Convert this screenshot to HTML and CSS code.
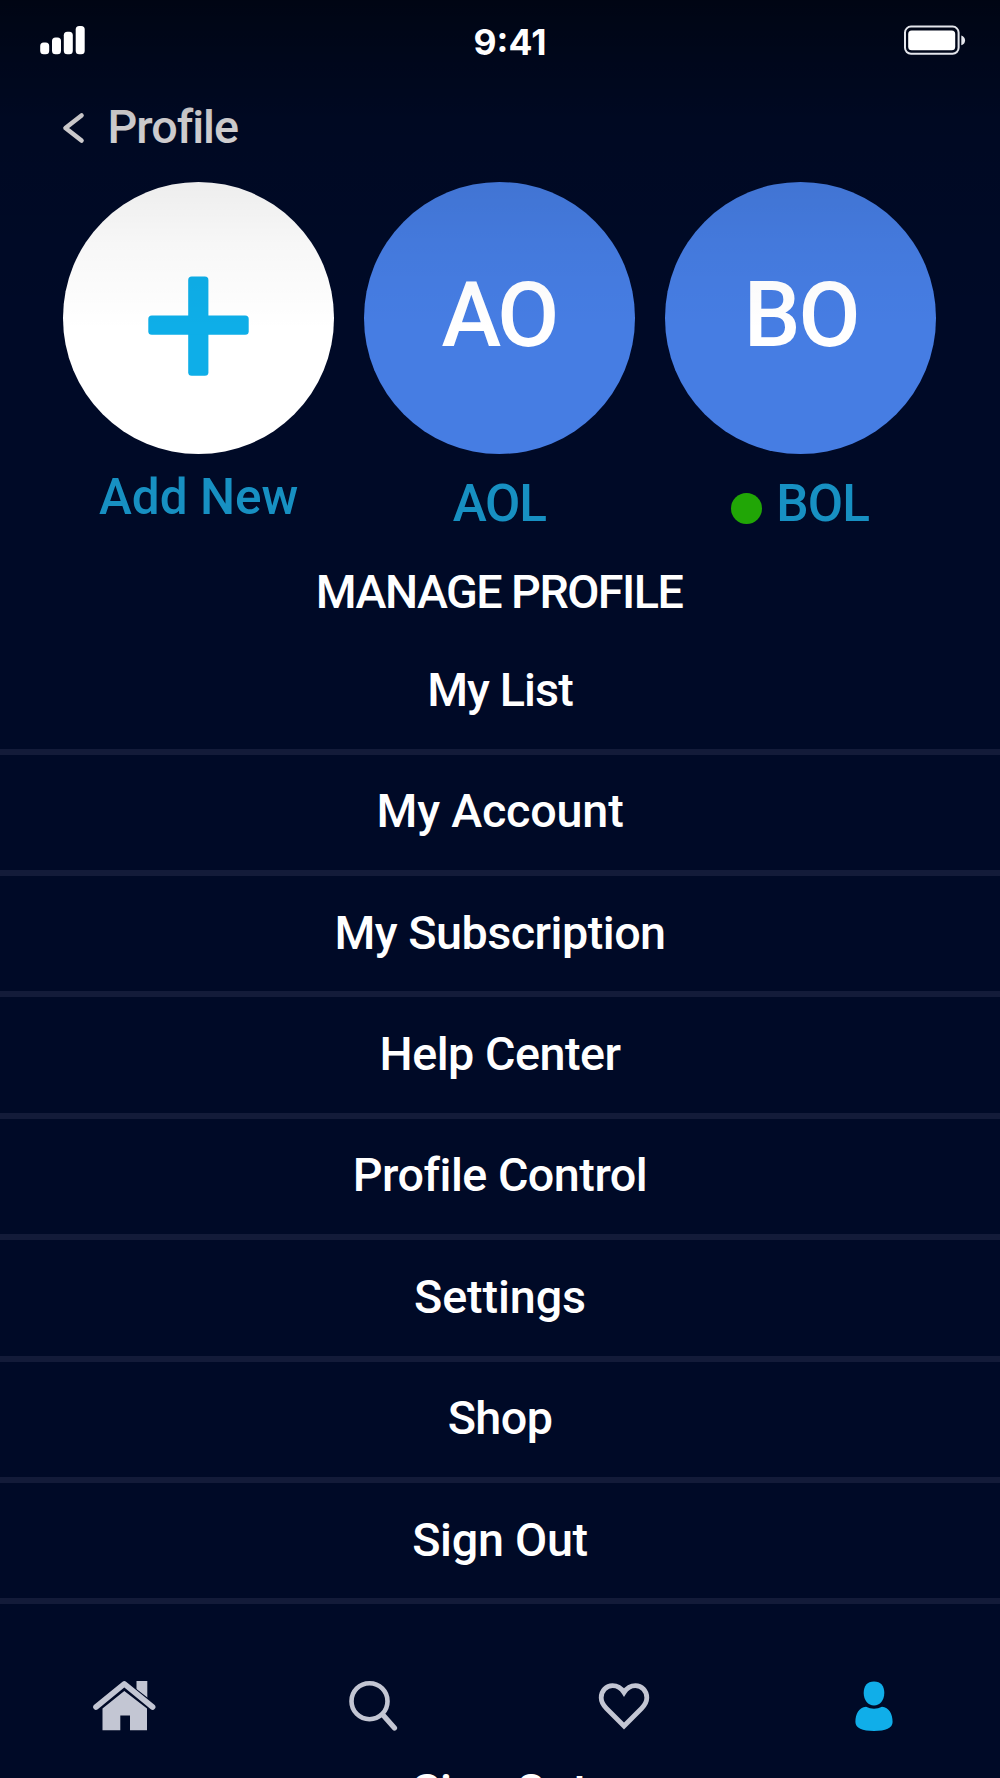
FILE: index.html
```
<!DOCTYPE html>
<html lang="en">
<head>
<meta charset="utf-8">
<title>Profile</title>
<link rel="stylesheet" href="styles.css">
</head>
<body>
<div class="screen">
  <div class="status">
    <svg class="signal" width="46" height="30" viewBox="0 0 46 30" fill="#fff">
      <rect x="0.2" y="17.5" width="9" height="11.8" rx="3.5"/>
      <rect x="12" y="12.6" width="9" height="16.7" rx="3.5"/>
      <rect x="23.8" y="6.8" width="9" height="22.5" rx="3.5"/>
      <rect x="35.7" y="1" width="9" height="28.3" rx="3.5"/>
    </svg>
    <div class="time">9:41</div>
    <svg class="battery" width="62" height="30" viewBox="0 0 62 30">
      <rect x="1" y="1.6" width="53.6" height="27.2" rx="6" fill="none" stroke="#e4e6ec" stroke-width="2"/>
      <rect x="4.2" y="5.6" width="47" height="19.6" rx="3.5" fill="#fff"/>
      <path d="M57.3 10.6c5 1.4 5 8.2 0 9.6z" fill="#e4e6ec"/>
    </svg>
  </div>

  <header class="header">
    <svg class="back" width="24" height="34" viewBox="0 0 24 34" fill="none" stroke="#e6e4e6" stroke-width="4.6" stroke-linecap="round" stroke-linejoin="round"><path d="M19.500 4.500 3.500 17 19.500 29.500"/></svg>
    <h1 class="title">Profile</h1>
  </header>

  <section class="profiles">
    <div class="profile">
      <div class="avatar avatar-add">
        <svg width="102" height="101" viewBox="0 0 102 101" fill="#0eaee8"><rect x="40.2" y="0.5" width="20.2" height="99.2" rx="3.5"/><rect x="0.3" y="39.6" width="100.4" height="19.2" rx="3.5"/></svg>
      </div>
      <div class="label label-add">Add New</div>
    </div>
    <div class="profile">
      <div class="avatar ao">AO</div>
      <div class="label aol">AOL</div>
    </div>
    <div class="profile">
      <div class="avatar bo">BO</div>
      <div class="label bol"><span class="dot"></span>BOL</div>
    </div>
  </section>

  <h2 class="heading">MANAGE PROFILE</h2>

  <ul class="menu">
    <li class="item list">My List</li>
    <li class="item account">My Account</li>
    <li class="item subscription">My Subscription</li>
    <li class="item help">Help Center</li>
    <li class="item control">Profile Control</li>
    <li class="item settings">Settings</li>
    <li class="item shop">Shop</li>
    <li class="item signout">Sign Out</li>
  </ul>

  <nav class="tabs">
    <svg width="64" height="52" viewBox="0 0 64 52" fill="#c3c6d3">
      <path d="M44.500 1h10.800v21.500L44.500 14z"/>
      <path d="M4 27.300 32.300 5.200 60.600 27.300" fill="none" stroke="#000a27" stroke-width="9"/>
      <path d="M10.500 28.500 32.300 11 55 28.500V50.300H38V35.500H28.300V50.300H10.500z"/>
      <path d="M4 27 32.300 3.800 60.600 27" fill="none" stroke="#c3c6d3" stroke-width="5.600" stroke-linecap="round" stroke-linejoin="round"/>
    </svg>
    <svg width="52" height="52" viewBox="0 0 52 52" fill="none" stroke="#c3c6d3" stroke-width="4.600" stroke-linecap="round"><circle cx="21.500" cy="21.200" r="18"/><path d="M35 35 46.500 48" stroke-width="5.200"/></svg>
    <svg width="54" height="52" viewBox="0 0 54 52" fill="none" stroke="#c3c6d3" stroke-width="4.800" stroke-linejoin="miter"><path d="M27 46 9.500 28.500C5.500 24.500 4.200 21.500 4.200 17.800 4.200 10.500 9.500 5.700 15.500 5.700 20.500 5.700 24.500 8.500 27 12.500 29.500 8.500 33.500 5.700 38.500 5.700 44.500 5.700 49.800 10.500 49.800 17.800 49.800 21.500 48.500 24.500 44.500 28.500z"/></svg>
    <svg width="40" height="52" viewBox="0 0 40 52" fill="#10aee9"><path d="M20 1.500c6.800 0 10.300 4.300 10.300 11.500S26 25.500 20 25.500 9.700 20.200 9.700 13 13.200 1.500 20 1.500z"/><path d="M12 26.800Q20 30.500 28 26.800C35 27.500 38.600 34 38.600 42c0 6-7 9-18.600 9S1.400 48 1.400 42C1.400 34 5 27.500 12 26.800z"/></svg>
  </nav>
  <div class="item signout">Sign Out</div>
</div>
</body>
</html>
```
FILE: styles.css
```
* { box-sizing: border-box; }

body {
  margin: 0;
  background: #000a27;
  color: #fff;
  font-family: Roboto, sans-serif;
  font-weight: 500;
}

.screen {
  position: relative;
  width: 1000px;
  height: 1778px;
  overflow: hidden;
}

/* dark fade over the top of the screen */
.screen::after {
  content: "";
  position: absolute;
  inset: 0 0 auto;
  height: 330px;
  pointer-events: none;
  background: linear-gradient(rgba(0,0,0,.5), rgba(0,0,0,.3) 60px, rgba(0,0,0,.13) 120px, rgba(0,0,0,.07) 182px, rgba(0,0,0,.03) 245px, rgba(0,0,0,0));
}

.status {
  position: relative;
  z-index: 1;
  display: grid;
  grid-template-columns: 1fr auto 1fr;
  align-items: center;
  height: 80px;
  padding: 0 34px 0 40px;
}
.battery { justify-self: end; }
.time {
  margin: 6px 0 0 14px;
  font: 700 35.5px/44px Inter, sans-serif;
}

.header {
  display: flex;
  align-items: center;
  height: 92px;
  padding-left: 62px;
}
.back { margin-top: 3px; }
.title {
  margin: 2px 0 0 21.5px;
  color: #e8e6e8;
  font-size: 46.7px;
  font-weight: 500;
  letter-spacing: -1px;
}

.profiles {
  display: flex;
  gap: 29.7px;
  height: 391.7px;
  padding: 10px 0 0 63px;
}
.profile {
  display: flex;
  flex-direction: column;
  align-items: center;
  width: 271.3px;
}
.avatar {
  display: flex;
  flex: none;
  align-items: center;
  justify-content: center;
  width: 271.3px;
  height: 271.7px;
  padding-bottom: 4px;
  border-radius: 50%;
  background: #467de3;
  font-size: 90px;
}
.avatar-add {
  padding: 17px 0 0;
  background: #fff;
}
.ao { padding-right: 2px; letter-spacing: -3.4px; }
.bo { padding-left: 1px; letter-spacing: -2px; }

.label {
  display: flex;
  align-items: center;
  margin-top: 20.8px;
  color: #1790c2;
  font-size: 51.3px;
  font-weight: 500;
  line-height: 60px;
}
.label-add { margin-top: 13px; font-size: 49.5px; }
.aol { padding-right: 1px; letter-spacing: -1.27px; }
.bol { letter-spacing: -.88px; }
.dot {
  width: 31px;
  height: 31px;
  margin: 8px 14px 0 -1px;
  border-radius: 50%;
  background: #21a606;
}

.heading {
  height: 69.5px;
  margin: 0;
  padding-right: 2px;
  font-size: 46.7px;
  font-weight: 500;
  line-height: 56px;
  letter-spacing: -1.54px;
  text-align: center;
}

.menu { margin: 0; padding: 0; list-style: none; }
.item {
  display: flex;
  align-items: center;
  justify-content: center;
  height: 121.4px;
  padding-bottom: 2px;
  border-bottom: 6px solid #131b39;
  font-size: 46.7px;
}
.list { letter-spacing: -.91px; }
.account { letter-spacing: -.2px; }
.subscription, .control { letter-spacing: -.5px; }
.help { letter-spacing: -.5px; }
.settings { letter-spacing: -.1px; }
.shop { letter-spacing: -.57px; }
.signout { letter-spacing: -.27px; }

.tabs {
  display: grid;
  grid-template-columns: 256.5px 249px 256.5px 40px;
  align-items: start;
  height: 130.3px;
  padding: 76px 0 0 91.5px;
}
```
